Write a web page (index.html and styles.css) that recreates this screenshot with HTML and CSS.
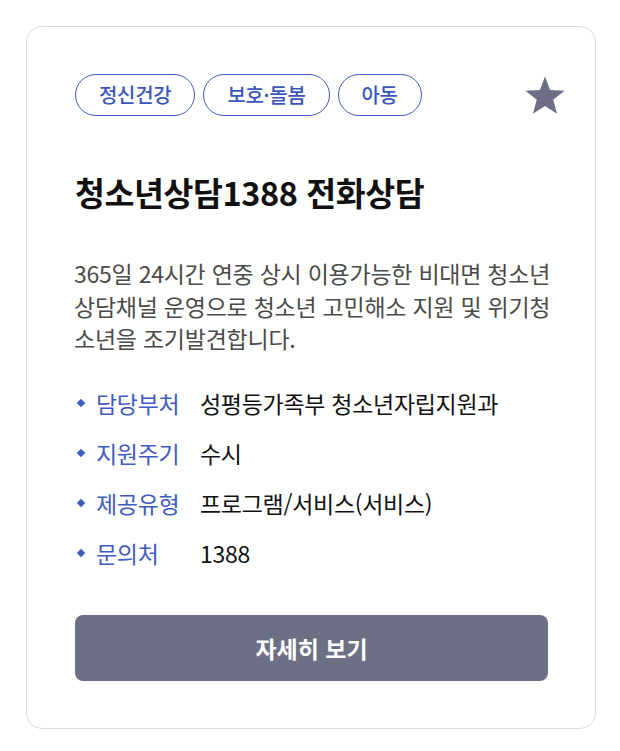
FILE: index.html
```html
<!DOCTYPE html>
<html lang="ko">
<head>
  <meta charset="UTF-8" />
  <title>청소년상담1388 전화상담</title>
  <meta name="viewport" content="width=device-width, initial-scale=1.0">
  <link rel="stylesheet" href="styles.css">
</head>
<body>

<main class="card">
  <div class="card-top">
    <ul class="tags">
      <li class="tag">정신건강</li>
      <li class="tag">보호·돌봄</li>
      <li class="tag">아동</li>
    </ul>
    <button class="fav" type="button" aria-label="관심 등록">
      <svg width="42" height="39" viewBox="0 0 24 22.3">
        <path d="M12 0.3l2.9 7.7 8.3 0.4-6.5 5.2 2.2 8L12 17.1l-6.9 4.5 2.2-8-6.5-5.2 8.3-0.4z" fill="#6b6e84"/>
      </svg>
    </button>
  </div>

  <h1 class="title">청소년상담1388 전화상담</h1>

  <p class="desc">365일 24시간 연중 상시 이용가능한 비대면 청소년 상담채널 운영으로 청소년 고민해소 지원 및 위기청소년을 조기발견합니다.</p>

  <dl class="info">
    <div class="row">
      <dt>담당부처</dt>
      <dd>성평등가족부 청소년자립지원과</dd>
    </div>
    <div class="row">
      <dt>지원주기</dt>
      <dd>수시</dd>
    </div>
    <div class="row">
      <dt>제공유형</dt>
      <dd>프로그램/서비스(서비스)</dd>
    </div>
    <div class="row">
      <dt>문의처</dt>
      <dd>1388</dd>
    </div>
  </dl>

  <button class="more" type="button">자세히 보기</button>
</main>

</body>
</html>
```

FILE: styles.css
```css
* {
  box-sizing: border-box;
}

body {
  font-family: "Noto Sans CJK KR", "Noto Sans", sans-serif;
  background: #ffffff;
  margin: 0;
  padding: 26px 24px 0 26px;
}

.card {
  background: #fff;
  border: 1px solid #dcdcdc;
  border-radius: 16px;
  padding: 47px 47px 47px 48px;
  height: 703px;
}

.card-top {
  display: flex;
  align-items: flex-start;
  justify-content: space-between;
}

.tags {
  list-style: none;
  margin: 0;
  padding: 0;
  display: flex;
  gap: 8px;
}

.tag {
  border: 1px solid #3f5bbf;
  border-radius: 21px;
  color: #3a56bd;
  font-size: 20px;
  font-weight: 500;
  line-height: 26px;
  padding: 7px 23px;
  letter-spacing: -0.3px;
}

.fav {
  border: none;
  background: none;
  padding: 0;
  margin: 2px -18px 0 0;
  cursor: pointer;
}

.title {
  margin: 52px 0 0;
  font-size: 32.5px;
  font-weight: 700;
  line-height: 44px;
  color: #111;
  letter-spacing: -0.4px;
}

.desc {
  margin: 43px -8px 0 -1px;
  font-size: 23px;
  line-height: 32.5px;
  color: #4a4a4a;
  letter-spacing: -0.25px;
}

.info {
  margin: 23px 0 0;
}

.row {
  display: flex;
  align-items: center;
  height: 50px;
  font-size: 23px;
  letter-spacing: -0.3px;
}

.row dt {
  position: relative;
  width: 125px;
  padding-left: 21px;
  color: #3f5bc0;
}

.row dt::before {
  content: "";
  position: absolute;
  left: 3px;
  top: 50%;
  width: 6px;
  height: 6px;
  margin-top: -3px;
  background: #3f5bc0;
  transform: rotate(45deg);
}

.row dd {
  margin: 0;
  color: #111;
}

.more {
  display: block;
  width: 100%;
  margin-top: 37px;
  height: 66px;
  border: none;
  border-radius: 8px;
  background: #6d6f84;
  color: #fff;
  font-family: inherit;
  font-size: 23px;
  font-weight: 700;
  cursor: pointer;
}
```
